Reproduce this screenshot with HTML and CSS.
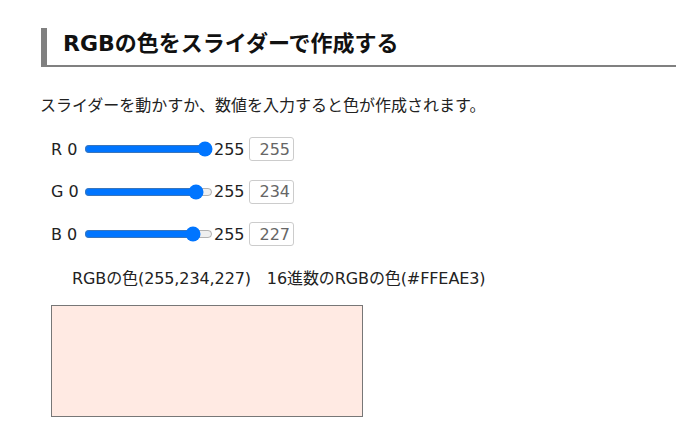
FILE: index.html
```html
<!DOCTYPE html>
<html lang="ja">
<head>
<meta charset="utf-8">
<link rel="stylesheet" href="styles.css">
</head>
<body>
<main class="page">
  <h2 class="title">RGBの色をスライダーで作成する</h2>
  <p class="lead">スライダーを動かすか、数値を入力すると色が作成されます。</p>
  <div class="rows">
    <div class="row"><span class="lbl">R 0</span><input class="range" type="range" min="0" max="255" value="255"><span class="max">255</span><input class="num" type="text" value="255"></div>
    <div class="row"><span class="lbl">G 0</span><input class="range" type="range" min="0" max="255" value="234"><span class="max">255</span><input class="num" type="text" value="234"></div>
    <div class="row"><span class="lbl">B 0</span><input class="range" type="range" min="0" max="255" value="227"><span class="max">255</span><input class="num" type="text" value="227"></div>
  </div>
  <p class="result">RGBの色(255,234,227)　16進数のRGBの色(#FFEAE3)</p>
  <div class="swatch"></div>
</main>
</body>
</html>
```
FILE: styles.css
```css
html, body {
  margin: 0;
  padding: 0;
  background: #fff;
}
body {
  font-family: "DejaVu Sans", "Noto Sans CJK JP", sans-serif;
  color: #222;
  font-size: 16px;
}
.page {
  padding: 28px 0 0 41px;
}
.title {
  margin: 0;
  height: 37px;
  box-sizing: content-box;
  border-left: 6px solid #808080;
  border-bottom: 2px solid #808080;
  padding: 0 0 0 16px;
  font-size: 22px;
  font-weight: bold;
  color: #111;
  line-height: 31px;
}
.lead {
  margin: 25px 0 0 -1px;
  line-height: 24px;
  font-family: "Noto Sans CJK JP", sans-serif;
}
.rows {
  margin-top: 12px;
  padding-left: 10px;
  display: flex;
  flex-direction: column;
}
.row {
  height: 42.5px;
  display: flex;
  align-items: center;
}
.lbl {
  width: 31px;
}
.range {
  width: 129px;
  height: 16px;
  margin: 2px;
  accent-color: #0075ff;
}
.max {
  margin-left: -1px;
  width: 35px;
}
.num {
  width: 45px;
  height: 24px;
  box-sizing: border-box;
  border: 1px solid #ccc;
  border-radius: 3px;
  text-align: right;
  color: #666;
  font-family: "DejaVu Sans", sans-serif;
  font-size: 16px;
  padding: 0 3px 0 0;
  margin: 0;
}
.result {
  margin: 11px 0 0 31px;
  line-height: 24px;
  letter-spacing: -0.1px;
}
.swatch {
  margin: 14px 0 0 10px;
  width: 312px;
  height: 112px;
  box-sizing: border-box;
  border: 1px solid #777;
  background: #ffeae3;
}
```
